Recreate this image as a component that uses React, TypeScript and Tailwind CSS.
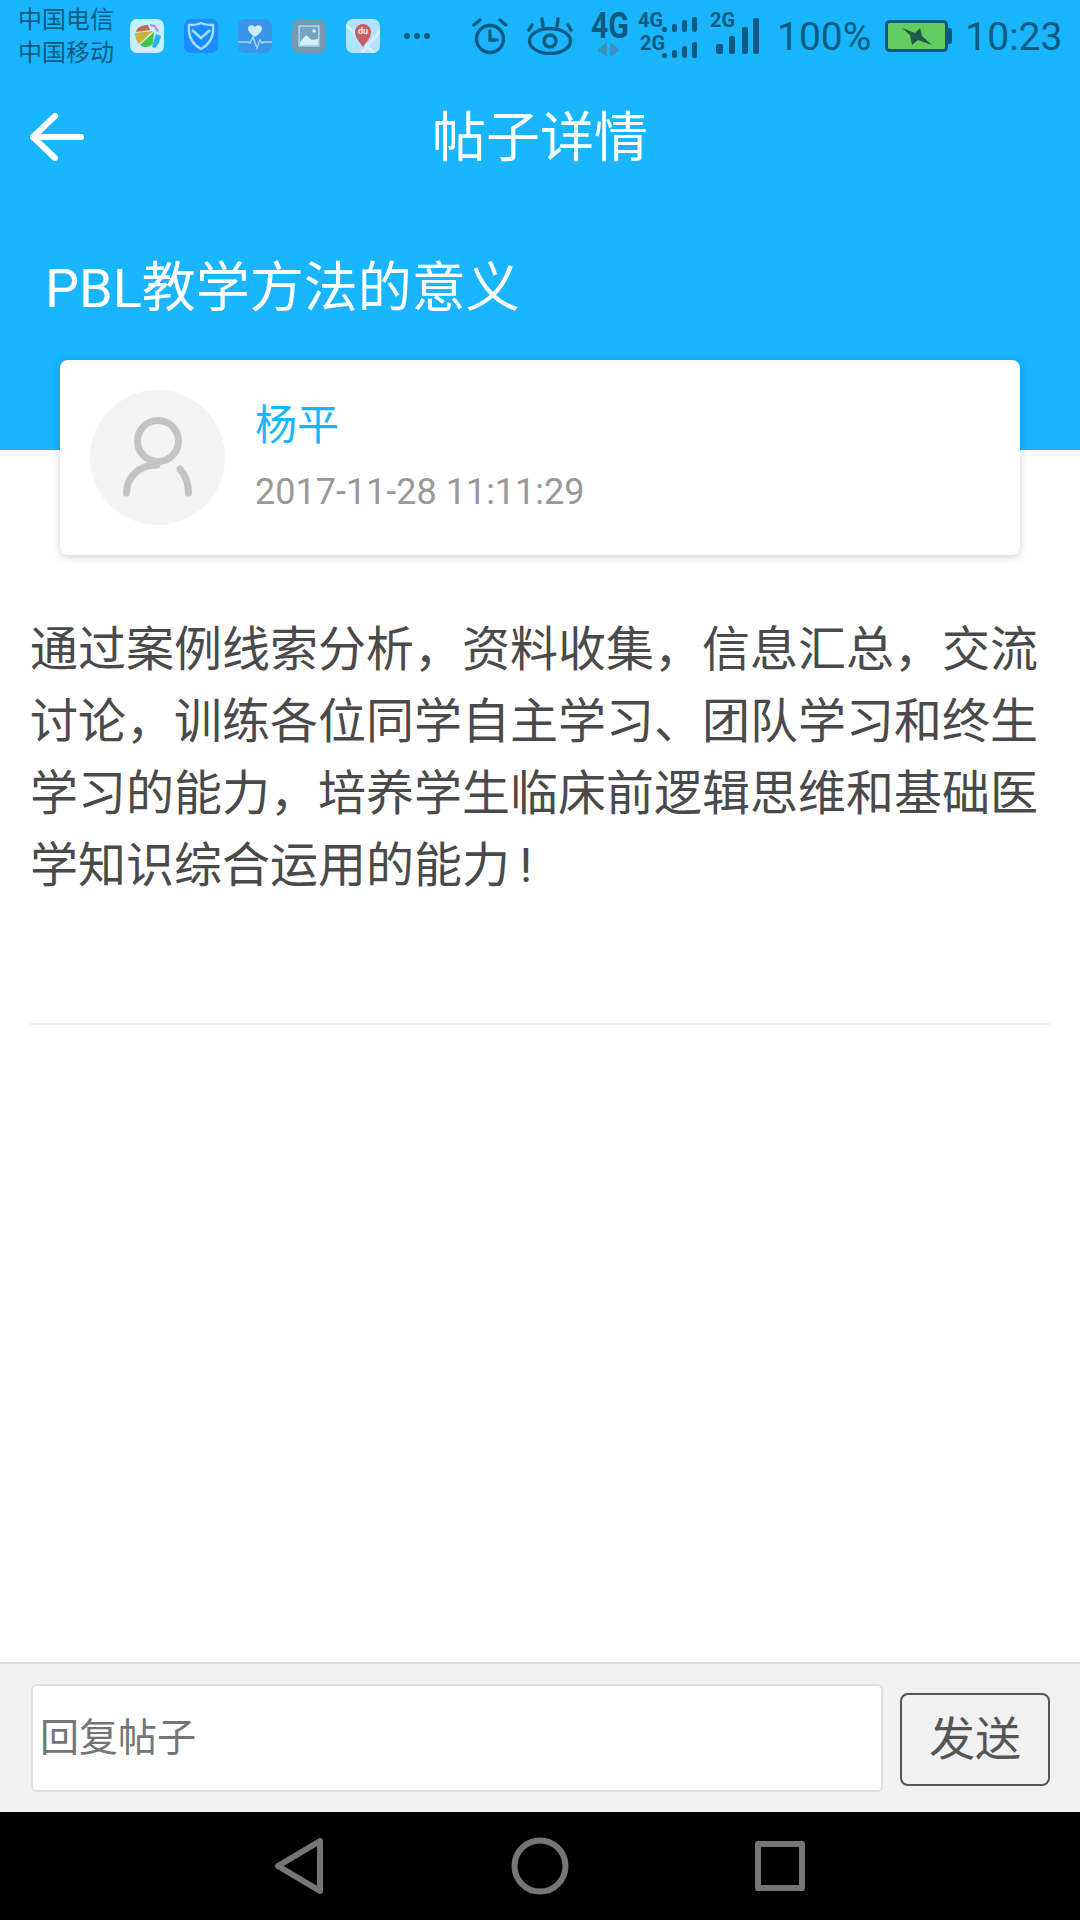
const statusColor = "#0c5a80";

function AppIcons() {
  return (
    <div className="flex gap-[20px] ml-[17px]">
      <svg width="34" height="34" viewBox="0 0 34 34">
        <rect width="34" height="34" rx="7" fill="#c9ecff" />
        <path d="M6 13 C7 8 12 6 18 6 L20 11 Z" fill="#c46a45" />
        <path d="M5 14 L23 12 L9 25 C6 22 5 18 5 14 Z" fill="#c8b23a" />
        <path d="M10 26 L24 13 L23 24 C20 29 14 29 10 26 Z" fill="#3fc54a" />
        <path d="M26 15 L31 17 C30 22 28 26 25 29 L22 28 Z" fill="#1fb6f0" />
        <path d="M20 5 L25 6 L29 12 L27 13 L24 8 L20 7 Z" fill="#b98ae8" />
      </svg>
      <svg width="34" height="34" viewBox="0 0 34 34">
        <rect width="34" height="34" rx="7" fill="#1a8cff" />
        <path d="M17 4 C21 6 25 6 29 6 C30 16 26 25 17 30 C8 25 4 16 5 6 C9 6 13 6 17 4 Z" fill="none" stroke="#a4dcff" strokeWidth="2.4" />
        <path d="M8 11 L17 19 L26 11" fill="none" stroke="#a4dcff" strokeWidth="2.6" />
      </svg>
      <svg width="34" height="34" viewBox="0 0 34 34">
        <rect width="34" height="34" rx="7" fill="#3a95e8" />
        <path d="M17 18 C11 14 10 11 10 9 C10 6 15 5 17 8 C19 5 24 6 24 9 C24 11 23 14 17 18 Z" fill="#c9ecff" />
        <path d="M0 23 H9 L12 24 L15 18 L19 29 L22 21 L24 24 L26 23 H34" fill="none" stroke="#a4dcff" strokeWidth="1.4" />
      </svg>
      <svg width="34" height="34" viewBox="0 0 34 34">
        <rect width="34" height="34" rx="7" fill="#6f9bb3" />
        <rect x="7" y="7" width="20" height="20" fill="#b7dff5" stroke="#a8cfe4" strokeWidth="1.5" />
        <path d="M8 23 L14 16 L20 21 L26 20 V26 H8 Z" fill="#d4efff" />
        <path d="M8 8 H26 V20 L20 21 L14 16 L8 23 Z" fill="#76a5bf" />
        <circle cx="22" cy="12" r="1.8" fill="#c9ecff" />
      </svg>
      <svg width="34" height="34" viewBox="0 0 34 34">
        <rect width="34" height="34" rx="7" fill="#b3e3ff" />
        <path d="M0 6 L28 34 M34 12 L16 34" stroke="#d3efff" strokeWidth="3" />
        <path d="M17 28 C13 22 9 19 9 13 C9 8 13 5 17 5 C21 5 25 8 25 13 C25 19 21 22 17 28 Z" fill="#c65f63" />
        <text x="17" y="15" textAnchor="middle" fontSize="9" fontWeight="700" fill="#f4e3e3" fontFamily="Roboto, sans-serif">du</text>
      </svg>
    </div>
  );
}

function AlarmIcon() {
  return (
    <svg width="36" height="38" viewBox="0 0 36 38" fill="none" stroke={statusColor} strokeWidth="3.4" strokeLinecap="round">
      <circle cx="18" cy="22" r="13.5" />
      <path d="M18 14 V23 H25" />
      <path d="M2 8 L8 3" />
      <path d="M34 8 L28 3" />
    </svg>
  );
}

function EyeIcon() {
  return (
    <svg width="46" height="38" viewBox="0 0 46 38" fill="none" stroke={statusColor} strokeWidth="3.4" strokeLinecap="round">
      <ellipse cx="23" cy="24" rx="20.5" ry="12.5" />
      <circle cx="23" cy="24" r="6" />
      <path d="M2 13 L5 8" />
      <path d="M16 9 L15 2" />
      <path d="M30 9 L31 2" />
      <path d="M44 13 L41 8" />
    </svg>
  );
}

function SignalIcons() {
  const label = "Roboto, sans-serif";
  return (
    <svg width="172" height="72" viewBox="589 0 172 72" fill={statusColor}>
      <text x="591" y="38" fontSize="36" fontWeight="700" fontFamily={label} textLength="38" lengthAdjust="spacingAndGlyphs">4G</text>
      <path d="M607 42 V57 L597 50 Z" fill="#3b91bd" />
      <path d="M610 42 V57 L620 50 Z" fill="#3b91bd" />
      <text x="638" y="27" fontSize="20" fontWeight="700" fontFamily={label}>4G</text>
      <text x="640" y="50" fontSize="20" fontWeight="700" fontFamily={label}>2G</text>
      <rect x="662" y="27" width="5" height="5" rx="2" />
      <rect x="672" y="24" width="5" height="8" rx="2" />
      <rect x="682" y="20" width="5" height="12" rx="2" />
      <rect x="692" y="17" width="5" height="15" rx="2" />
      <rect x="662" y="53" width="5" height="5" rx="2" />
      <rect x="672" y="50" width="5" height="8" rx="2" />
      <rect x="682" y="46" width="5" height="12" rx="2" />
      <rect x="692" y="42" width="5" height="16" rx="2" />
      <text x="710" y="27" fontSize="20" fontWeight="700" fontFamily={label}>2G</text>
      <rect x="716" y="44" width="7" height="10" rx="2" />
      <rect x="729" y="36" width="6" height="18" rx="2" />
      <rect x="742" y="27" width="6" height="27" rx="2" />
      <rect x="753" y="18" width="6" height="36" rx="2" />
    </svg>
  );
}

function BatteryIcon() {
  return (
    <svg width="67" height="32" viewBox="0 0 67 32">
      <rect x="1.5" y="1.5" width="60" height="29" rx="3" fill="#62cc5e" stroke={statusColor} strokeWidth="3" />
      <rect x="62" y="8" width="5" height="16" rx="2" fill={statusColor} />
      <path d="M17 8 L30 13 L35 8 L37 16 L47 25 L33 20 L27 25 L25 15 Z" fill="#1d5a4b" />
    </svg>
  );
}

function StatusBar() {
  return (
    <div className="flex items-center h-[72px] pl-[18px] text-[#0c5a80]">
      <div className="w-[95px] pt-[2px] text-[24px] leading-[33px] whitespace-nowrap">
        <div>中国电信</div>
        <div>中国移动</div>
      </div>
      <AppIcons />
      <div className="flex gap-[4px] ml-[24px] mr-[42px] w-[26px]">
        <span className="w-[6px] h-[6px] rounded-full bg-[#0c5a80]" />
        <span className="w-[6px] h-[6px] rounded-full bg-[#0c5a80]" />
        <span className="w-[6px] h-[6px] rounded-full bg-[#0c5a80]" />
      </div>
      <AlarmIcon />
      <div className="ml-[19px]">
        <EyeIcon />
      </div>
      <div className="ml-[16px]">
        <SignalIcons />
      </div>
      <span className="ml-[16px] pt-[3px] text-[39px] leading-none">100%</span>
      <div className="ml-[14px]">
        <BatteryIcon />
      </div>
      <span className="ml-[13px] pt-[3px] text-[39px] leading-none">10:23</span>
    </div>
  );
}

function Header() {
  return (
    <div className="h-[450px] bg-[#19b5fe] text-white">
      <StatusBar />
      <div className="grid grid-cols-[1fr_auto_1fr] items-center h-[130px] pl-[30px]">
        <svg width="54" height="48" viewBox="0 0 54 48" fill="none" stroke="#fff" strokeWidth="6" strokeLinecap="round" strokeLinejoin="round">
          <path d="M25 3 L3 24 L25 45" />
          <path d="M3 24 H51" />
        </svg>
        <h1 className="pt-[3px] text-[54px] leading-none font-normal -translate-x-[15px]">帖子详情</h1>
        <div />
      </div>
      <h2 className="mt-[39px] pl-[45px] text-[54px] leading-[96px] font-normal">PBL教学方法的意义</h2>
    </div>
  );
}

function AuthorCard() {
  return (
    <div className="relative mx-[60px] -mt-[90px] h-[195px] flex items-center gap-[30px] px-[30px] bg-white rounded-[8px] shadow-[0_2px_8px_rgba(0,0,0,0.18)]">
      <div className="w-[135px] h-[135px] rounded-full bg-[#f4f4f4]">
        <svg width="135" height="135" viewBox="0 0 135 135" fill="none" stroke="#c4c4c4" strokeWidth="7" strokeLinecap="round">
          <circle cx="68" cy="51" r="20.5" />
          <path d="M36.5 103 C36.5 88 48 75 67 75" />
          <path d="M90 79 C95 85 98.5 93 98.5 103" />
        </svg>
      </div>
      <div className="flex flex-col gap-[18px]">
        <div className="pt-[2px] h-[50px] text-[42px] leading-[50px] text-[#19b5fe]">杨平</div>
        <div className="text-[36px] leading-[50px] text-[#999999]">2017-11-28 11:11:29</div>
      </div>
    </div>
  );
}

function ReplyBar() {
  return (
    <div className="h-[150px] flex items-center pl-[31px] bg-[#f1f1f1] border-t-2 border-[#dddddd]">
      <input
        placeholder="回复帖子"
        className="w-[852px] h-[108px] px-[7px] bg-white border-2 border-[#e0e0e0] rounded-[6px] text-[39px] placeholder:text-[#757575] outline-none"
      />
      <button className="ml-[17px] mt-[2px] w-[150px] h-[93px] border-2 border-[#555555] rounded-[8px] text-[46px] text-[#555555]">发送</button>
    </div>
  );
}

function NavBar() {
  return (
    <div className="h-[108px] flex items-center justify-center bg-black">
      <svg width="560" height="60" viewBox="260 1836 560 60" fill="none" stroke="#757575" strokeWidth="6" strokeLinejoin="round">
        <path d="M320 1841 V1891 L278 1866 Z" />
        <circle cx="540" cy="1866" r="25.5" />
        <rect x="758" y="1844" width="44" height="44" />
      </svg>
    </div>
  );
}

export default function App() {
  return (
    <div className="flex flex-col w-[1080px] h-[1920px] bg-white font-['Roboto','Noto_Sans_CJK_SC',sans-serif]" lang="zh-CN">
      <Header />
      <AuthorCard />
      <main className="flex-1 px-[30px]">
        <p className="mt-[59px] text-[48px] leading-[72px] text-[#4a4a4a]">
          通过案例线索分析，资料收集，信息汇总，交流讨论，训练各位同学自主学习、团队学习和终生学习的能力，培养学生临床前逻辑思维和基础医学知识综合运用的能力{"\u2009"}!
        </p>
        <div className="mt-[121px] h-[2px] bg-[#f0f0f0]" />
      </main>
      <ReplyBar />
      <NavBar />
    </div>
  );
}
